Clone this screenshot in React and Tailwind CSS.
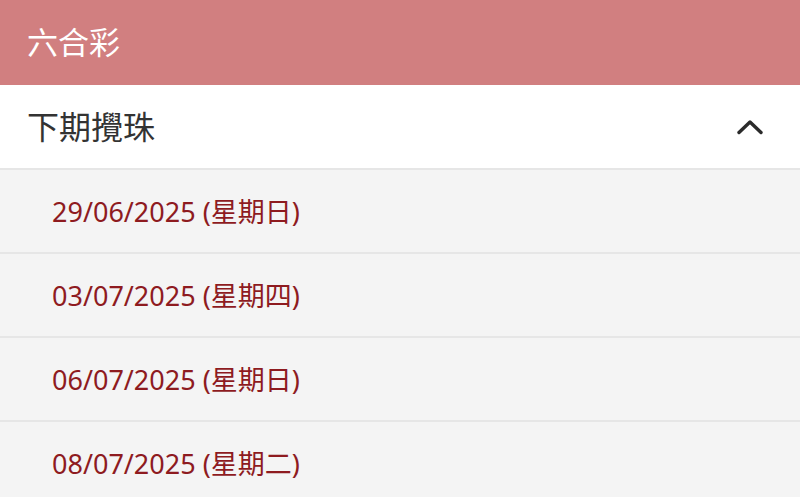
import React from "react";

const DRAWS = [
  "29/06/2025 (星期日)",
  "03/07/2025 (星期四)",
  "06/07/2025 (星期日)",
  "08/07/2025 (星期二)",
];

const font = { fontFamily: '"Noto Sans", "Noto Sans CJK TC", sans-serif' };

export default function App() {
  return (
    <div className="w-[800px] h-[497px] overflow-hidden bg-[#f4f4f4]" style={font}>
      {/* Title bar */}
      <header className="h-[85px] bg-[#d17f80] flex items-center px-[27px]">
        <h1 className="text-[31px] text-white leading-none">六合彩</h1>
      </header>

      {/* Accordion header */}
      <div className="h-[85px] bg-white border-b-2 border-[#e6e6e6] flex items-center justify-between pl-[27px] pr-[37px]">
        <h2 className="text-[32px] text-[#333333] leading-none">下期攪珠</h2>
        <svg width="26" height="16" viewBox="0 0 26 16" fill="none">
          <polyline
            points="2,13.5 13,3 24,13.5"
            stroke="#2b2b2b"
            strokeWidth="3.4"
            strokeLinecap="round"
            strokeLinejoin="round"
          />
        </svg>
      </div>

      {/* Draw dates */}
      <ul>
        {DRAWS.map((d) => (
          <li
            key={d}
            className="h-[84px] flex items-center pl-[52px] border-b-2 border-[#e6e6e6] text-[27px] text-[#8e1b1f] leading-none"
          >
            {d}
          </li>
        ))}
      </ul>
    </div>
  );
}
